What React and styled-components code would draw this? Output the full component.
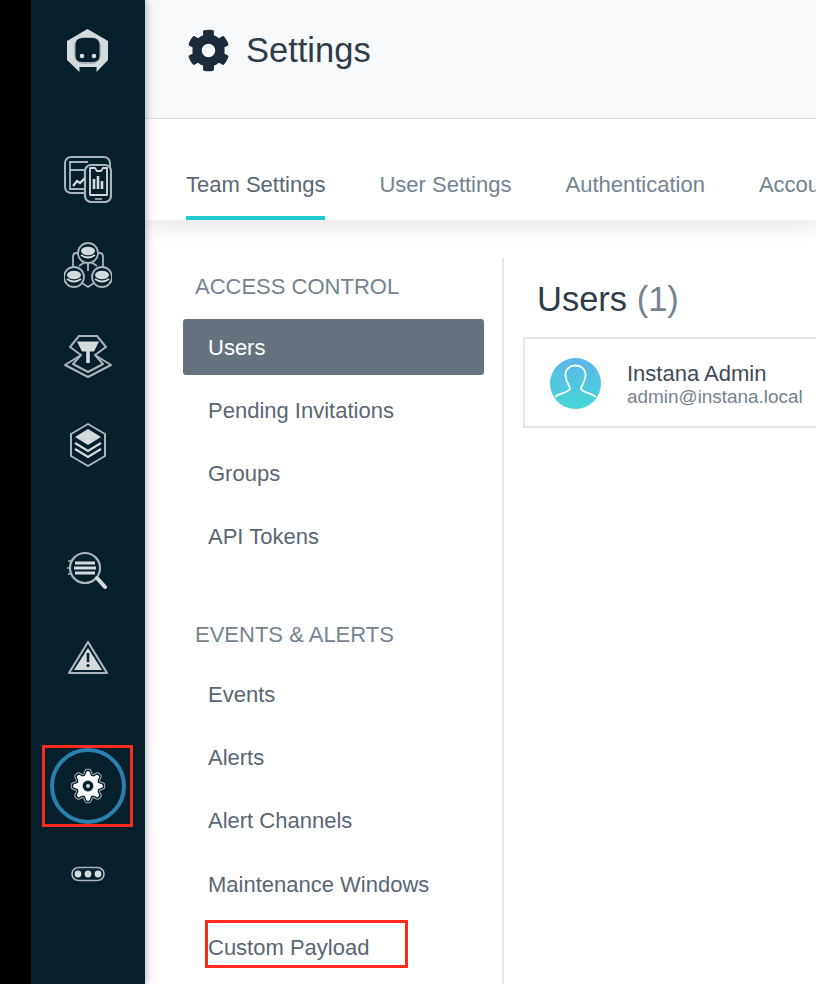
import React from 'react';
import styled, { createGlobalStyle } from 'styled-components';
import { FaCog } from 'react-icons/fa';

//////////////////////////////////////////////

const GlobalStyle = createGlobalStyle`
  html, body {
    margin: 0;
    padding: 0;
    background: #fff;
    overflow: hidden;
  }
  body {
    font-family: "Liberation Sans", Arial, sans-serif;
  }
`;

const PageDiv = styled.div`
  display: flex;
  width: 816px;
  height: 984px;
  overflow: hidden;
  background: #000;
`;

const RailDiv = styled.div`
  flex: 0 0 114px;
  margin-left: 31px;
  display: flex;
  flex-direction: column;
  align-items: center;
  padding-top: 26px;
  background: #051f2b;
  box-shadow: 2px 0 7px rgba(0, 0, 0, .25);
  position: relative;
  z-index: 3;
`;

const RailIcon = styled.div`
  position: relative;
  width: 48px;
  height: 48px;
  margin-top: ${p => p.$gap || 0}px;
  svg { display: block; }
`;

const RedBox = styled.div`
  position: absolute;
  border: 3px solid #fb2c1f;
  box-sizing: border-box;
  pointer-events: none;
`;

const GearBox = styled(RedBox)`
  left: -22px;
  top: -18px;
  width: 91px;
  height: 82px;
`;

const PayloadBox = styled(RedBox)`
  left: 22px;
  top: 1px;
  width: 203px;
  height: 48px;
`;

const MainDiv = styled.div`
  flex: 1;
  min-width: 0;
  display: flex;
  flex-direction: column;
  background: #fff;
`;

const HeaderDiv = styled.div`
  display: flex;
  align-items: center;
  gap: 16px;
  height: 119px;
  padding: 0 0 18px 42px;
  box-sizing: border-box;
  background: #f8f9fb;
  border-bottom: 1px solid #dfe3e8;
  color: #1c2b39;
  flex: none;
`;

const HeaderTitle = styled.div`
  font-size: 34.5px;
  color: #2f3b47;
`;

const TabBar = styled.div`
  display: flex;
  gap: 54px;
  height: 101px;
  padding-left: 41px;
  box-sizing: border-box;
  background: #fff;
  box-shadow: 0 8px 20px rgba(0, 0, 0, .09);
  flex: none;
  white-space: nowrap;
  position: relative;
  z-index: 2;
`;

const Tab = styled.div`
  display: flex;
  align-items: center;
  height: 101px;
  box-sizing: border-box;
  padding-top: 34px;
  font-size: 22px;
  color: ${p => (p.$active ? '#5a6673' : '#75838f')};
  border-bottom: 4px solid ${p => (p.$active ? '#22cccc' : 'transparent')};
`;

const BodyDiv = styled.div`
  display: flex;
  flex: 1;
  margin-top: 38px;
`;

const SideNav = styled.div`
  flex: 0 0 359px;
  box-sizing: border-box;
  padding-left: 38px;
  border-right: 2px solid #e3e6ea;
`;

const SectionLabel = styled.div`
  height: 28px;
  line-height: 28px;
  margin: ${p => (p.$first ? 15 : 56)}px 0 18px;
  padding-left: 12px;
  font-size: 22px;
  color: #75838f;
`;

const NavItem = styled.div`
  position: relative;
  width: 301px;
  height: 56px;
  margin-bottom: 7.2px;
  padding: 1px 0 0 25px;
  box-sizing: border-box;
  display: flex;
  align-items: center;
  font-size: 22px;
  border-radius: 3px;
  color: ${p => (p.$active ? '#fff' : '#5a6673')};
  background: ${p => (p.$active ? '#67727f' : 'transparent')};
`;

const ContentDiv = styled.div`
  flex: 0 0 700px;
  padding-left: 19px;
`;

const Heading = styled.div`
  height: 40px;
  line-height: 40px;
  margin: 21px 0 18px 14px;
  font-size: 34.5px;
  color: #2f3b47;
  span { color: #75838f; }
`;

const UserCard = styled.div`
  display: flex;
  align-items: center;
  height: 91px;
  padding: 1px 0 0 25px;
  box-sizing: border-box;
  border: 2px solid #e3e6ea;
`;

const Avatar = styled.svg`
  flex: none;
  display: block;
  margin-right: 26px;
`;

const UserName = styled.div`
  font-size: 22px;
  line-height: 26px;
  color: #3f4a56;
`;

const UserMail = styled.div`
  font-size: 18.9px;
  line-height: 19px;
  color: #75838f;
`;

//////////////////////////////////////////////

const LINE = '#aab4b9';
const FILL = '#d5dadd';
const BG = '#051f2b';

const LogoIcon = () => (
  <svg width="48" height="48" viewBox="0 0 48 48">
    <path d="M23.5 3 L44 15 V34 L32.5 46 V41 H15.5 V46 L3 34 V15 Z" fill={FILL} />
    <rect x="10" y="11" width="27" height="27" rx="9" fill={LINE} />
    <path d="M11.5 19 Q11.5 12 19 12 H28 Q35.5 12 35.5 19 V30 Q35.5 36 28 36 H19 Q11.5 36 11.5 30 Z" fill={BG} />
    <circle cx="18" cy="30" r="2.3" fill={FILL} />
    <circle cx="30" cy="30" r="2.3" fill={FILL} />
  </svg>
);

const DevicesIcon = () => (
  <svg width="48" height="48" viewBox="0 0 48 48" fill="none">
    <rect x="1" y="2" width="45" height="36" rx="6" stroke={LINE} strokeWidth="2" />
    <path d="M6 15 H24 M24 7 H6 V34 H24" stroke={LINE} strokeWidth="1.8" />
    <rect x="21" y="10" width="26" height="37" rx="6" fill={BG} stroke={LINE} strokeWidth="2.2" />
    <path d="M26 13 H31 L33 16 H37 L39 13 H43 V40 H26 Z" stroke={FILL} strokeWidth="1.8" strokeLinejoin="round" />
    <path d="M9 31 L13 26 L16 28 L21 23" stroke={FILL} strokeWidth="2.2" />
    <path d="M30 34 V24 M34 34 V21 M38 34 V26" stroke={FILL} strokeWidth="2.6" />
    <path d="M31 44 H38" stroke={LINE} strokeWidth="1.6" />
  </svg>
);

const ClusterIcon = () => (
  <svg width="48" height="48" viewBox="0 0 48 48" fill="none">
    <path d="M15 12 H12 Q9 12 9 16 V26 M33 12 H36 Q39 12 39 16 V26" stroke={LINE} strokeWidth="1.8" />
    <path d="M15 25 L24 19 L33 25 M24 22 V30 M18 42 L24 46 L30 42" stroke={LINE} strokeWidth="1.8" />
    {[[24, 12], [10, 36], [38, 36]].map(([x, y]) => (
      <g key={x}>
        <circle cx={x} cy={y} r="10" fill={BG} stroke={LINE} strokeWidth="1.8" />
        <ellipse cx={x} cy={y - 2} rx="7" ry="4.2" fill={FILL} />
        <path d={`M${x - 7} ${y + 2} Q${x} ${y + 7} ${x + 7} ${y + 2}`} stroke={FILL} strokeWidth="1.8" />
      </g>
    ))}
  </svg>
);

const ServiceIcon = () => (
  <svg width="48" height="48" viewBox="0 0 48 48" fill="none">
    <path d="M15 5 H33 L42 16 L31 24 L47 34 L24 46 L1 34 L17 24 L6 16 Z" stroke={LINE} strokeWidth="2" strokeLinejoin="round" />
    <path d="M17 24 L9 33 L24 41 L39 33 L31 24" stroke={LINE} strokeWidth="2" strokeLinejoin="round" />
    <path d="M13 10.5 H35 L30 20.5 H18 Z" fill={FILL} />
    <path d="M24 20 V32" stroke={FILL} strokeWidth="3.6" />
  </svg>
);

const LayersIcon = () => (
  <svg width="48" height="48" viewBox="0 0 48 48" fill="none">
    <path d="M24 3 L41 13 V35 L24 45 L7 35 V13 Z" fill={BG} stroke={LINE} strokeWidth="2" strokeLinejoin="round" />
    <path d="M24 8 L37 16 L24 24 L11 16 Z" fill={FILL} />
    <path d="M11 22 L24 30 L37 22 M11 28 L24 36 L37 28" stroke={FILL} strokeWidth="2.2" />
  </svg>
);

const SearchIcon = () => (
  <svg width="48" height="48" viewBox="0 0 48 48" fill="none">
    <circle cx="21" cy="22" r="15" stroke={LINE} strokeWidth="2.2" />
    <path d="M11 17 H31 M10 22 H32 M11 27 H31" stroke={FILL} strokeWidth="3" />
    <path d="M4 15 H8 M3 22 H6 M4 28 H8" stroke={LINE} strokeWidth="1.4" />
    <path d="M33 32 L41 41" stroke={FILL} strokeWidth="4" strokeLinecap="round" />
  </svg>
);

const AlertIcon = () => (
  <svg width="48" height="48" viewBox="0 0 48 48" fill="none">
    <path d="M24 8 L43 39 H5 Z" stroke={LINE} strokeWidth="2.2" strokeLinejoin="round" />
    <path d="M24 14 L38 36 H10 Z" fill={FILL} />
    <path d="M24 19 V28" stroke={BG} strokeWidth="2.6" />
    <circle cx="24" cy="31.5" r="1.6" fill={BG} />
  </svg>
);

// teeth of the rail gear, worked out once instead of by hand
const gearPath = (c, outer, inner, teeth) => {
  const pts = [];
  for (let i = 0; i < teeth * 4; i++) {
    const r = i % 4 < 2 ? outer : inner;
    const a = ((i - 0.5) / (teeth * 4)) * Math.PI * 2;
    pts.push(`${(c + r * Math.sin(a)).toFixed(1)} ${(c - r * Math.cos(a)).toFixed(1)}`);
  }
  return `M${pts.join(' L')} Z`;
};

const SettingsIcon = () => (
  <svg width="48" height="48" viewBox="0 0 48 48" fill="none" style={{ overflow: 'visible' }}>
    <circle cx="24" cy="23" r="36" stroke="#2a7fae" strokeWidth="4" />
    <g transform="translate(0 -1)">
      <path d={gearPath(24, 15.5, 11.5, 8)} stroke={LINE} strokeWidth="3.6" strokeLinejoin="round" />
      <path d={gearPath(24, 15.5, 11.5, 8)} stroke={BG} strokeWidth="1.6" strokeLinejoin="round" fill="#fff" />
      <path d={gearPath(24, 14.5, 10.5, 8)} fill="#fff" />
      <circle cx="24" cy="24" r="5.4" fill={BG} />
      <circle cx="24" cy="24" r="2" fill={FILL} />
    </g>
  </svg>
);

const MoreIcon = () => (
  <svg width="48" height="48" viewBox="0 0 48 48" fill="none">
    <rect x="8" y="17.5" width="32" height="13" rx="6.5" stroke={LINE} strokeWidth="1.6" />
    <circle cx="14" cy="24" r="3.4" fill={FILL} />
    <circle cx="24" cy="24" r="3.4" fill={FILL} />
    <circle cx="34" cy="24" r="3.4" fill={FILL} />
  </svg>
);

const UserAvatar = () => (
  <Avatar width="51" height="51" viewBox="0 0 51 51">
    <defs>
      <linearGradient id="avatarFill" x1="0" y1="0" x2="0" y2="1">
        <stop offset="0" stopColor="#5cb6ea" />
        <stop offset="1" stopColor="#46d6d6" />
      </linearGradient>
    </defs>
    <circle cx="25.5" cy="25.5" r="25.5" fill="url(#avatarFill)" />
    <path
      d="M5 39 C10 35 17 35 20 31 C20 28 16 24 15.5 18 C15 11 20 7.5 25.5 7.5 C31 7.5 36 11 35.5 18 C35 24 31 28 31 31 C34 35 41 35 46 39"
      fill="none"
      stroke="#fff"
      strokeWidth="1.8"
    />
  </Avatar>
);

//////////////////////////////////////////////

const tabs = ['Team Settings', 'User Settings', 'Authentication', 'Account'];
const access = ['Users', 'Pending Invitations', 'Groups', 'API Tokens'];
const events = ['Events', 'Alerts', 'Alert Channels', 'Maintenance Windows'];

const Rail = () => (
  <RailDiv>
    <RailIcon><LogoIcon /></RailIcon>
    <RailIcon $gap={81}><DevicesIcon /></RailIcon>
    <RailIcon $gap={38}><ClusterIcon /></RailIcon>
    <RailIcon $gap={42}><ServiceIcon /></RailIcon>
    <RailIcon $gap={42}><LayersIcon /></RailIcon>
    <RailIcon $gap={77}><SearchIcon /></RailIcon>
    <RailIcon $gap={40}><AlertIcon /></RailIcon>
    <RailIcon $gap={81}>
      <SettingsIcon />
      <GearBox />
    </RailIcon>
    <RailIcon $gap={39}><MoreIcon /></RailIcon>
  </RailDiv>
);

const App = () => (
  <PageDiv>
    <GlobalStyle />
    <Rail />
    <MainDiv>
      <HeaderDiv>
        <FaCog size={43} />
        <HeaderTitle>Settings</HeaderTitle>
      </HeaderDiv>
      <TabBar>
        {tabs.map((t, i) => <Tab key={t} $active={i === 0}>{t}</Tab>)}
      </TabBar>
      <BodyDiv>
        <SideNav>
          <SectionLabel $first>ACCESS CONTROL</SectionLabel>
          {access.map((t, i) => <NavItem key={t} $active={i === 0}>{t}</NavItem>)}
          <SectionLabel>EVENTS &amp; ALERTS</SectionLabel>
          {events.map(t => <NavItem key={t}>{t}</NavItem>)}
          <NavItem>
            Custom Payload
            <PayloadBox />
          </NavItem>
        </SideNav>
        <ContentDiv>
          <Heading>Users <span>(1)</span></Heading>
          <UserCard>
            <UserAvatar />
            <div>
              <UserName>Instana Admin</UserName>
              <UserMail>admin@instana.local</UserMail>
            </div>
          </UserCard>
        </ContentDiv>
      </BodyDiv>
    </MainDiv>
  </PageDiv>
);

export default App;
